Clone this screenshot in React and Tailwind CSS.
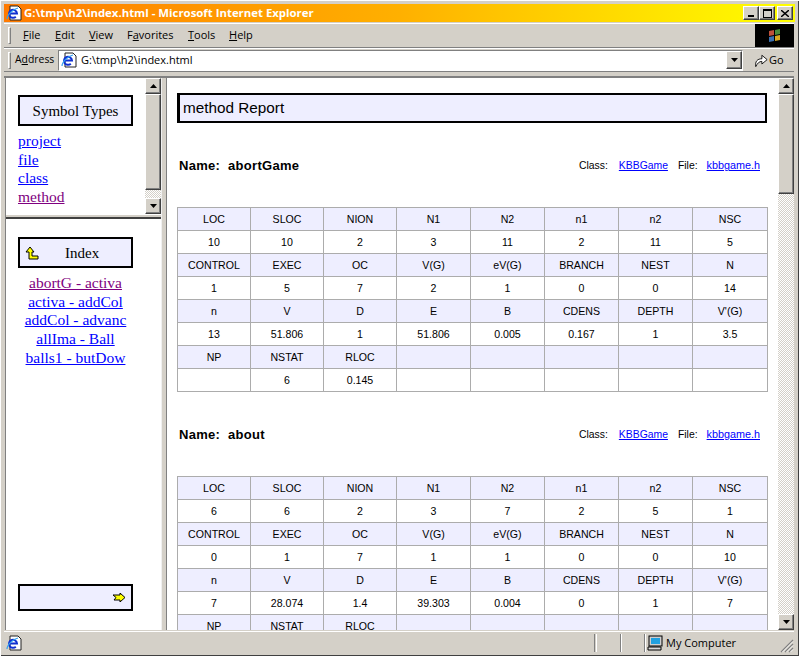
const bevel = "border border-t-white border-l-white border-r-[#404040] border-b-[#404040] bg-[#d4d0c8] shadow-[inset_-1px_-1px_0_#808080]";
const track = "bg-[repeating-conic-gradient(#d4d0c8_0_25%,#ffffff_0_50%)] bg-[length:2px_2px]";
const etched = "border-l border-l-[#808080] border-r border-r-white";

function IeIcon({ className }) {
  return (
    <svg viewBox="0 0 16 16" className={className}>
      <path d="M4 1h8l3 3v11H4z" fill="#fff" stroke="#222" />
      <path d="M3.500 8.500h7.500a4 4 0 1 0-1.200 3.200" fill="none" stroke="#1030d0" strokeWidth="2" />
      <path d="M1 14C1 10 7 4 12 3" stroke="#30a0f0" strokeWidth="1.2" fill="none" />
    </svg>
  );
}

function Arrow({ up }) {
  return (
    <svg viewBox="0 0 7 4" className="w-[7px] h-[4px]">
      <path d={up ? "M3.500 0L7 4H0z" : "M0 0h7L3.500 4z"} fill="#000" />
    </svg>
  );
}

function ScrollButton({ up }) {
  return <div className={`${bevel} w-[16px] h-[16px] flex items-center justify-center shrink-0`}><Arrow up={up} /></div>;
}

function Scrollbar({ thumb }) {
  return (
    <div className="w-[16px] h-full flex flex-col shrink-0">
      <ScrollButton up />
      <div className={`${bevel} w-[16px] shrink-0`} style={{ height: thumb }} />
      <div className={`flex-1 ${track}`} />
      <ScrollButton />
    </div>
  );
}

function NavBox({ children, className = "" }) {
  return <div className={`w-[115px] border-2 border-black bg-[#eeeeff] font-['Liberation_Serif',serif] text-[15px] text-black ${className}`}>{children}</div>;
}

const tableA = [
  ["LOC", "SLOC", "NION", "N1", "N2", "n1", "n2", "NSC"],
  ["10", "10", "2", "3", "11", "2", "11", "5"],
  ["CONTROL", "EXEC", "OC", "V(G)", "eV(G)", "BRANCH", "NEST", "N"],
  ["1", "5", "7", "2", "1", "0", "0", "14"],
  ["n", "V", "D", "E", "B", "CDENS", "DEPTH", "V'(G)"],
  ["13", "51.806", "1", "51.806", "0.005", "0.167", "1", "3.5"],
  ["NP", "NSTAT", "RLOC", "", "", "", "", ""],
  ["", "6", "0.145", "", "", "", "", ""],
];
const tableB = [
  ["LOC", "SLOC", "NION", "N1", "N2", "n1", "n2", "NSC"],
  ["6", "6", "2", "3", "7", "2", "5", "1"],
  ["CONTROL", "EXEC", "OC", "V(G)", "eV(G)", "BRANCH", "NEST", "N"],
  ["0", "1", "7", "1", "1", "0", "0", "10"],
  ["n", "V", "D", "E", "B", "CDENS", "DEPTH", "V'(G)"],
  ["7", "28.074", "1.4", "39.303", "0.004", "0", "1", "7"],
  ["NP", "NSTAT", "RLOC", "", "", "", "", ""],
  ["", "", "", "", "", "", "", ""],
];

const colWidths = ["w-[73px]", "w-[73px]", "w-[73px]", "w-[74px]", "w-[74px]", "w-[74px]", "w-[74px]", "w-[75px]"];

function Metrics({ rows }) {
  return (
    <table className="w-[590px] table-fixed border-collapse text-[10.6px] text-black">
      <colgroup>
        {colWidths.map((w, i) => <col key={i} className={w} />)}
      </colgroup>
      <tbody>
        {rows.map((row, r) => (
          <tr key={r} className={r % 2 === 0 ? "bg-[#eeeeff] h-[23px]" : "bg-white h-[23px]"}>
            {row.map((c, i) => (
              <td key={i} className="border border-[#acacac] text-center p-0 pt-[2px]">{c}</td>
            ))}
          </tr>
        ))}
      </tbody>
    </table>
  );
}

function NameRow({ name, className = "" }) {
  return (
    <div className={`w-[590px] flex items-center justify-between text-black ${className}`}>
      <div className="pl-[2px] text-[13px] font-bold whitespace-pre tracking-[0.3px]">{"Name:  " + name}</div>
      <div className="pr-[7px] text-[10.4px] flex items-baseline">
        <span>Class:</span>
        <a className="ml-[11px] text-[#0000ff] underline">KBBGame</a>
        <span className="ml-[10px]">File:</span>
        <a className="ml-[9px] text-[10.8px] text-[#0000ff] underline">kbbgame.h</a>
      </div>
    </div>
  );
}

const menus = [["F", "ile", "w-[32px]"], ["E", "dit", "w-[34px]"], ["V", "iew", "w-[38px]"], ["Fa", "vorites", "w-[61px]"], ["T", "ools", "w-[41px]"], ["H", "elp", "w-[30px]"]];

export default function App() {
  return (
    <div className="w-[799px] h-[656px] overflow-hidden bg-[#d4d0c8] font-['Liberation_Sans',sans-serif] flex flex-col pt-[4px] pl-[4px] pr-[4px] shadow-[inset_1px_1px_0_#ffffff,inset_-1px_-1px_0_#404040]">
      <div className="h-[18px] shrink-0 w-[791px] flex items-center bg-gradient-to-r from-[#ff7a00] via-[#ffb000] to-[#ffff00] pl-[2px] pr-[2px]">
        <IeIcon className="w-[16px] h-[16px] shrink-0" />
        <span className="ml-[2px] font-['Open_Sans',sans-serif] text-[11.4px] font-bold text-white whitespace-nowrap flex-1">G:\tmp\h2\index.html - Microsoft Internet Explorer</span>
        <div className="flex items-center">
          {["min", "max"].map((k) => (
            <div key={k} className={`${bevel} w-[16px] h-[14px] flex items-center justify-center`}>
              {k === "min" ? <div className="w-[6px] h-[2px] bg-black mt-[6px]" /> : <div className="w-[9px] h-[9px] border border-black border-t-2" />}
            </div>
          ))}
          <div className={`${bevel} w-[16px] h-[14px] ml-[2px] flex items-center justify-center`}>
            <svg viewBox="0 0 8 7" className="w-[8px] h-[7px]"><path d="M0 0l8 7M8 0L0 7" stroke="#000" strokeWidth="1.4" /></svg>
          </div>
        </div>
      </div>

      <div className="mt-[1px] h-[25px] shrink-0 flex border-t border-t-white border-b border-b-[#808080] w-[790px]">
        <div className="ml-[4px] mt-[3px] w-[3px] h-[17px] border border-t-white border-l-white border-r-[#808080] border-b-[#808080]" />
        <div className="flex-1 flex items-center pl-[12px] text-[11px] font-['Open_Sans',sans-serif] text-black">
          {menus.map(([u, rest, w]) => (
            <span key={u} className={`${w} whitespace-nowrap`}>
              {u.length === 2 ? <>F<span className="underline">a</span></> : <span className="underline">{u}</span>}{rest}
            </span>
          ))}
        </div>
        <div className="w-[39px] h-[23px] bg-black flex items-center justify-center">
          <svg viewBox="0 0 16 16" className="w-[16px] h-[16px]">
            <path d="M2 3l5-1v5l-5 1z" fill="#c0503a" />
            <path d="M8 2l5-1v5l-5 1z" fill="#4a8a3a" />
            <path d="M2 9l5-1v5l-5 1z" fill="#3a6fb0" />
            <path d="M8 8l5-1v5l-5 1z" fill="#d8a820" />
          </svg>
        </div>
      </div>

      <div className="h-[24px] shrink-0 flex items-center border-t border-t-white border-b border-b-[#808080] w-[790px]">
        <div className="ml-[4px] w-[3px] h-[17px] border border-t-white border-l-white border-r-[#808080] border-b-[#808080]" />
        <span className="ml-[4px] w-[43px] text-[10.4px] font-['Open_Sans',sans-serif] text-black">A<span className="underline">d</span>dress</span>
        <div className="w-[685px] h-[21px] bg-white border border-t-[#808080] border-l-[#808080] border-r-white border-b-white flex items-center">
          <IeIcon className="w-[16px] h-[16px] ml-[2px] shrink-0" />
          <span className="ml-[4px] flex-1 text-[11px] font-['Open_Sans',sans-serif] text-black">G:\tmp\h2\index.html</span>
          <div className={`${bevel} w-[16px] h-[18px] flex items-center justify-center`}><Arrow /></div>
        </div>
        <div className="ml-[11px] flex items-center">
          <svg viewBox="0 0 16 16" className="w-[14px] h-[15px]">
            <path d="M2 15C1 9 4 6 9 6V2l6 5-6 5V9C6 9 4 11 2 15z" fill="#fff" stroke="#000" strokeWidth="1" />
          </svg>
          <span className="ml-[1px] text-[11px] font-['Open_Sans',sans-serif] text-black">Go</span>
        </div>
      </div>

      <div className="mt-[4px] h-[554px] shrink-0 flex w-[790px] pl-[1px] border-t-2 border-t-[#808080]">
        <div className="w-[156px] h-full flex flex-col shrink-0 border-l border-l-[#808080]">
          <div className="h-[136px] flex shrink-0 bg-white">
            <div className="flex-1 pl-[12px] pt-[17px]">
              <NavBox className="h-[31px] pt-[1px] flex items-center justify-center">Symbol Types</NavBox>
              <div className="mt-[6px] font-['Liberation_Serif',serif] text-[15.5px] leading-[18.7px] flex flex-col items-start">
                <a className="underline text-[#0000ff]">project</a>
                <a className="underline text-[#0000ff]">file</a>
                <a className="underline text-[#0000ff]">class</a>
                <a className="underline text-[#800080]">method</a>
              </div>
            </div>
            <Scrollbar thumb={96} />
          </div>
          <div className="h-[5px] shrink-0 bg-[#d4d0c8] border-b-2 border-b-[#404040] border-t border-t-white" />
          <div className="flex-1 flex flex-col bg-white pl-[12px] pt-[18px] pb-[19px]">
            <NavBox className="h-[31px] pt-[1px] flex items-center">
              <svg viewBox="0 0 14 14" className="w-[14px] h-[14px] ml-[5px]">
                <path d="M5 1l4 5H7v4h6v3H4V6H1z" fill="#ffff00" stroke="#000" strokeWidth="1" />
              </svg>
              <span className="ml-[26px]">Index</span>
            </NavBox>
            <div className="w-[115px] mt-[6px] font-['Liberation_Serif',serif] text-[15.5px] leading-[18.7px] flex flex-col items-center whitespace-nowrap">
              <a className="underline text-[#800080]">abortG - activa</a>
              <a className="underline text-[#0000ff]">activa - addCol</a>
              <a className="underline text-[#0000ff]">addCol - advanc</a>
              <a className="underline text-[#0000ff]">allIma - Ball</a>
              <a className="underline text-[#0000ff]">balls1 - butDow</a>
            </div>
            <NavBox className="mt-auto h-[27px] flex items-center justify-end pr-[5px]">
              <svg viewBox="0 0 13 9" className="w-[13px] h-[9px]">
                <path d="M0 2h7V0l5 4.500L7 9V7H1l2-2.500z" fill="#ffff00" stroke="#000" strokeWidth="1" />
              </svg>
            </NavBox>
          </div>
        </div>
        <div className="w-[6px] shrink-0 bg-[#d4d0c8] border-r border-r-[#808080] border-l border-l-[#f0f0f0]" />
        <div className="flex-1 min-w-0 h-full flex bg-white">
          <div className="flex-1 min-w-0 overflow-hidden pl-[10px] pt-[15px]">
            <div className="w-[590px] h-[30px] border-2 border-l-[3px] border-black bg-[#eeeeff] flex items-center pl-[3px] text-[15.3px] text-black">method Report</div>
            <NameRow name="abortGame" className="mt-[33px]" />
            <div className="mt-[31px]"><Metrics rows={tableA} /></div>
            <NameRow name="about" className="mt-[33px]" />
            <div className="mt-[32px]"><Metrics rows={tableB} /></div>
          </div>
          <Scrollbar thumb={100} />
        </div>
      </div>

      <div className="mt-[1px] h-[22px] shrink-0 w-[790px] flex border-t border-t-white items-center pl-[2px] pt-[1px] text-[11px] font-['Open_Sans',sans-serif] text-black">
        <IeIcon className="w-[16px] h-[16px] shrink-0" />
        <div className="flex-1" />
        <div className={`w-[3px] h-[18px] ${etched}`} />
        <div className="w-[23px]" />
        <div className={`w-[2px] h-[18px] ${etched}`} />
        <div className="w-[22px]" />
        <div className={`w-[2px] h-[18px] ${etched}`} />
        <svg viewBox="0 0 16 16" className="ml-[1px] w-[16px] h-[16px] shrink-0">
          <rect x="2" y="1" width="13" height="10" fill="#cfcfcf" stroke="#000" />
          <rect x="4" y="3" width="9" height="6" fill="#20a0e0" />
          <path d="M1 12h13v3H1z" fill="#d8d8d8" stroke="#000" />
        </svg>
        <span className="ml-[3px] w-[114px]">My Computer</span>
        <svg viewBox="0 0 14 14" className="w-[14px] h-[14px] self-end shrink-0">
          <path d="M13 1L1 13M13 5L5 13M13 9L9 13" stroke="#808080" strokeWidth="1.2" />
          <path d="M13 2.500L2.500 13M13 6.500L6.500 13M13 10.500L10.500 13" stroke="#ffffff" strokeWidth="0.8" />
        </svg>
      </div>
    </div>
  );
}
